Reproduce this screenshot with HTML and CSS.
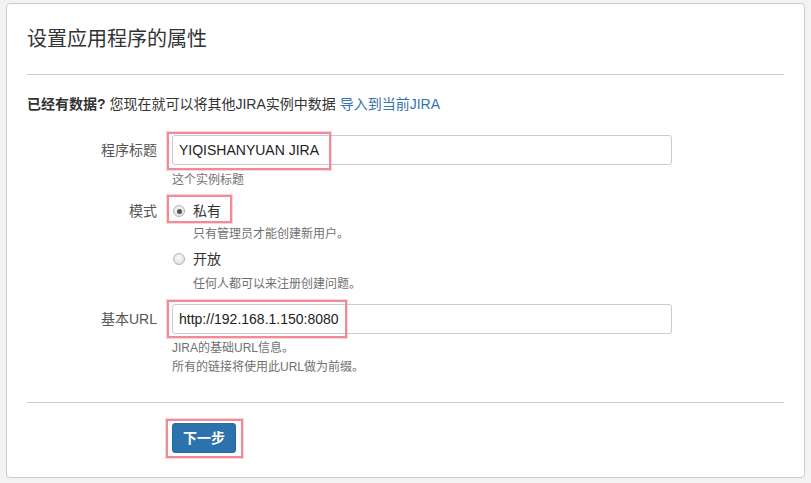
FILE: index.html
```html
<!DOCTYPE html>
<html lang="zh-CN">
<head>
<meta charset="utf-8">
<title>设置应用程序的属性</title>
<link rel="stylesheet" href="styles.css">
</head>
<body>
<div class="panel">
  <h2 class="title">设置应用程序的属性</h2>
  <hr class="rule">
  <p class="intro"><strong>已经有数据?</strong> 您现在就可以将其他JIRA实例中数据 <a href="#" class="link">导入到当前JIRA</a></p>

  <div class="field field-title">
    <label class="label">程序标题</label>
    <div class="control">
      <div class="input-wrap">
        <input class="text" type="text" value="YIQISHANYUAN JIRA">
        <span class="mark mark-title"></span>
      </div>
      <div class="help help-first">这个实例标题</div>
    </div>
  </div>

  <div class="field field-mode">
    <label class="label label-mode">模式</label>
    <div class="control">
      <div class="radio-row">
        <input class="radio" type="radio" name="mode" checked>
        <span class="radio-text">私有</span>
        <span class="mark mark-radio"></span>
      </div>
      <div class="help help-radio">只有管理员才能创建新用户。</div>
      <div class="radio-row radio-row-second">
        <input class="radio" type="radio" name="mode">
        <span class="radio-text">开放</span>
      </div>
      <div class="help help-radio">任何人都可以来注册创建问题。</div>
    </div>
  </div>

  <div class="field field-url">
    <label class="label">基本URL</label>
    <div class="control">
      <div class="input-wrap">
        <input class="text" type="text" value="http://192.168.1.150:8080">
        <span class="mark mark-url"></span>
      </div>
      <div class="help help-url">JIRA的基础URL信息。<br>所有的链接将使用此URL做为前缀。</div>
    </div>
  </div>

  <hr class="rule rule-bottom">

  <div class="actions">
    <div class="button-wrap">
      <button class="button" type="button">下一步</button>
      <span class="mark mark-button"></span>
    </div>
  </div>
</div>
</body>
</html>
```

FILE: styles.css
```css
* {
  box-sizing: border-box;
}

html, body {
  margin: 0;
  padding: 0;
}

body {
  background: #f3f3f3;
  font-family: "Liberation Sans", "Noto Sans CJK SC", sans-serif;
  color: #333;
  font-size: 14px;
}

.panel {
  margin: 3px 6px 0 6px;
  background: #fff;
  border: 1px solid #ccc;
  border-radius: 4px;
  padding: 21px 20px 24px 20px;
}

.title {
  margin: 0;
  font-size: 20px;
  line-height: 28px;
  font-weight: normal;
  color: #333;
}

.rule {
  margin: 21px 0 0 0;
  border: 0;
  border-top: 1px solid #ccc;
  height: 0;
}

.intro {
  margin: 19px 0 0 0;
  line-height: 20px;
  font-size: 14px;
}

.intro strong {
  font-weight: bold;
}

.link {
  color: #3572b0;
  text-decoration: none;
}

.field {
  display: grid;
  grid-template-columns: 130px 500px;
  column-gap: 15px;
}

.field-title {
  margin-top: 21px;
}

.field-mode {
  margin-top: 11px;
}

.field-url {
  margin-top: 11px;
}

.label {
  text-align: right;
  line-height: 30px;
  color: #555;
}

.label-mode {
  line-height: 22px;
}

.control {
  display: flex;
  flex-direction: column;
}

.input-wrap {
  position: relative;
  width: 500px;
}

.text {
  display: block;
  width: 500px;
  height: 30px;
  margin: 0;
  border: 1px solid #ccc;
  border-radius: 3px;
  padding: 0 6px;
  font-family: "Liberation Sans", "Noto Sans CJK SC", sans-serif;
  font-size: 14px;
  color: #222;
  background: #fff;
  outline: none;
}

.help {
  font-size: 12px;
  color: #707070;
}

.help-first {
  margin-top: 6px;
  line-height: 18px;
}

.help-radio {
  margin-top: 3px;
  line-height: 18px;
  padding-left: 21px;
}

.help-url {
  margin-top: 5px;
  line-height: 19px;
}

.radio-row {
  position: relative;
  display: flex;
  align-items: center;
  height: 22px;
  width: max-content;
}

.radio-row-second {
  margin-top: 5px;
}

.radio-row-second + .help-radio {
  margin-top: 5px;
}

.radio {
  appearance: none;
  -webkit-appearance: none;
  width: 12px;
  height: 12px;
  margin: 0 8px 0 1px;
  border: 1px solid #b5b5b5;
  border-radius: 50%;
  background: radial-gradient(circle at 50% 40%, #fafafa 0%, #e4e4e4 70%, #d6d6d6 100%);
  position: relative;
}

.radio:checked::after {
  content: "";
  position: absolute;
  left: 2.5px;
  top: 2.5px;
  width: 5px;
  height: 5px;
  border-radius: 50%;
  background: #555;
}

.radio-text {
  font-size: 14px;
  color: #333;
  line-height: 22px;
}

.rule-bottom {
  margin-top: 25px;
}

.actions {
  margin-top: 20px;
  padding-left: 145px;
}

.button-wrap {
  position: relative;
  display: inline-block;
  vertical-align: top;
}

.button {
  display: block;
  height: 30px;
  padding: 0 10px;
  border: 1px solid #2a6aa3;
  border-radius: 3px;
  background: #2c72ac;
  color: #fff;
  font-family: "Liberation Sans", "Noto Sans CJK SC", sans-serif;
  font-size: 14px;
  font-weight: bold;
  line-height: 28px;
}

.mark {
  position: absolute;
  border: 2px solid #f18c96;
  box-shadow: 0 0 0 1px rgba(245, 170, 178, 0.5);
  pointer-events: none;
}

.mark-title {
  left: -5px;
  top: -3px;
  width: 164px;
  height: 38px;
}

.mark-url {
  left: -5px;
  top: -4px;
  width: 180px;
  height: 38px;
}

.mark-radio {
  left: -5px;
  top: -5px;
  width: 65px;
  height: 28px;
}

.mark-button {
  left: -6px;
  top: -4px;
  width: 77px;
  height: 39px;
}
```
